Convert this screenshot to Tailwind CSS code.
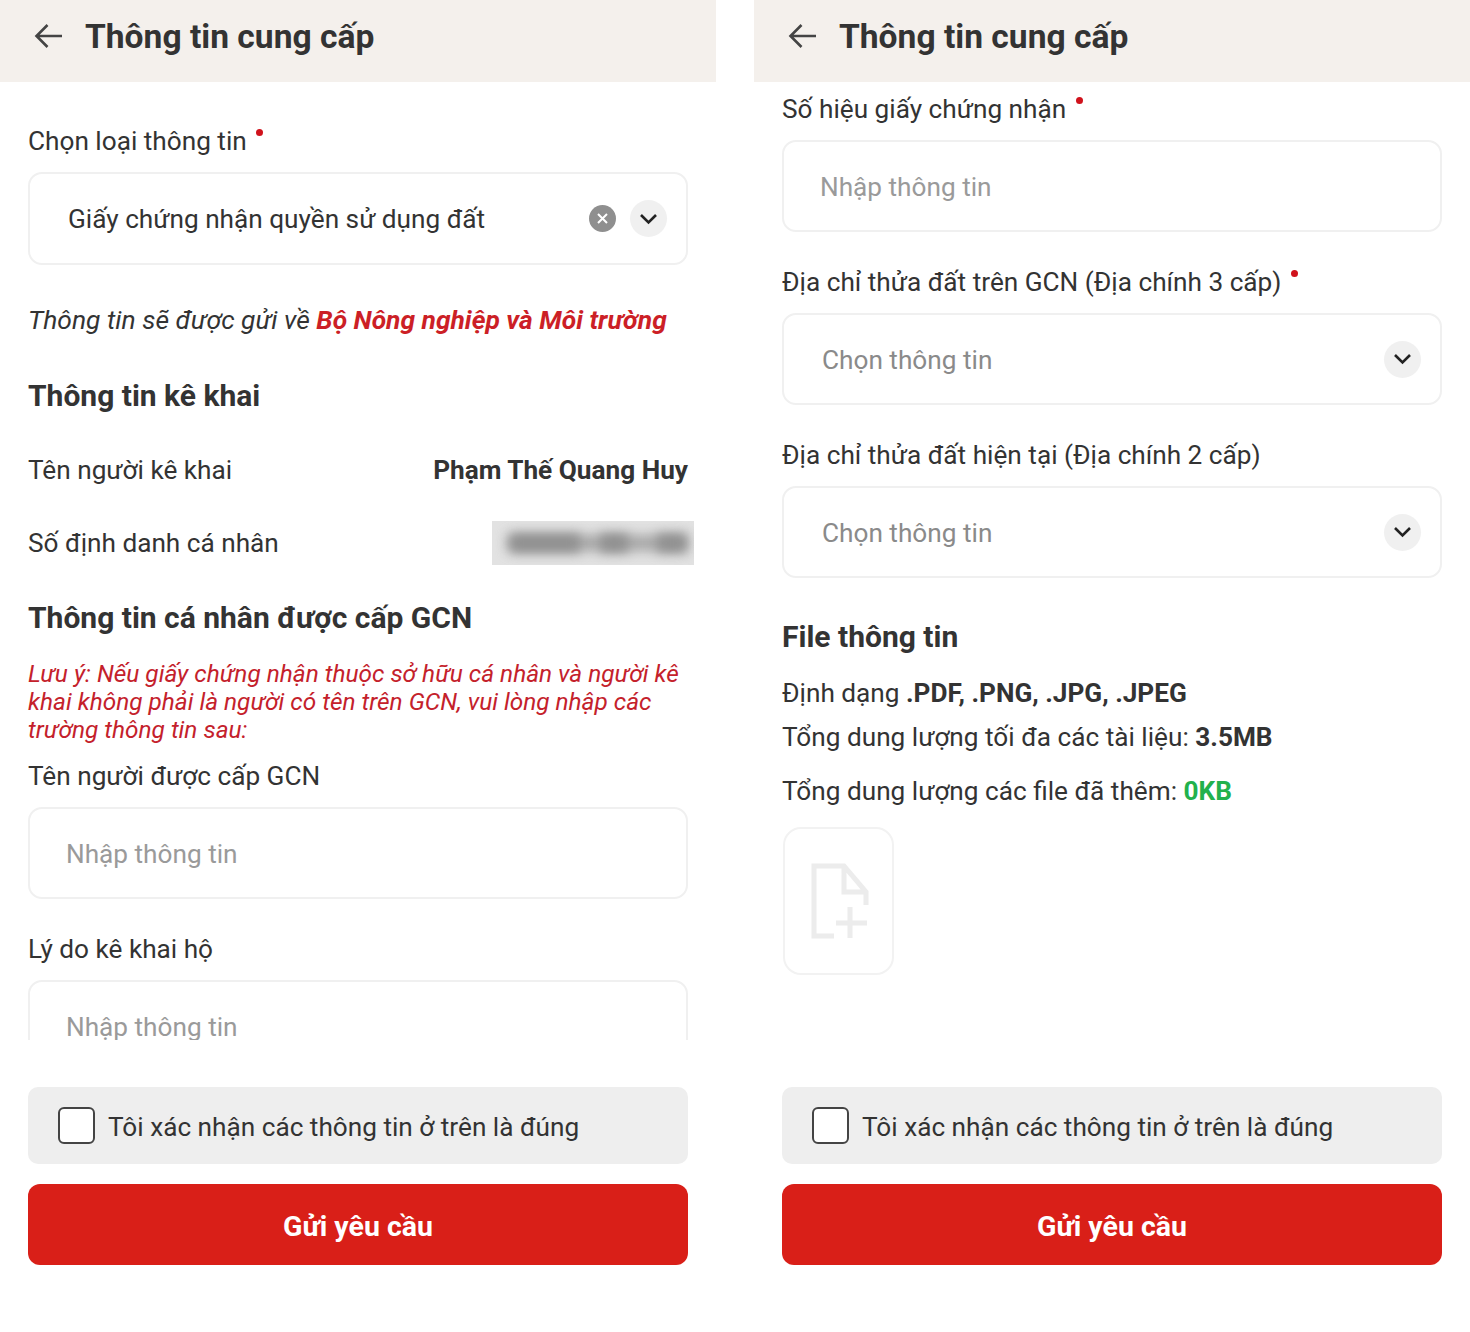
<!DOCTYPE html>
<html lang="vi">
<head>
    <meta charset="UTF-8">
    <title>Thông tin cung cấp</title>
    <script src="https://cdn.jsdelivr.net/npm/@tailwindcss/browser@4"></script>
</head>
<body class="bg-white text-[#333333] font-['Roboto',sans-serif] text-[26.2px]">
    <div class="flex justify-between w-[1470px] h-[1332px] overflow-hidden">

        <!-- left screen -->
        <section class="w-[716px]">
            <header class="h-[82px] bg-[#f4f0ec] flex items-center pl-[34px] pr-7">
                <svg class="w-[30px] h-[30px] mr-[21px] -mt-[10px]" viewBox="0 0 30 30" fill="none" stroke="#444" stroke-width="2.6"><path d="M28 15H3M13.5 4 2.500 15l11 11"/></svg>
                <h1 class="text-[33.6px] font-bold leading-9 -mt-[8px]">Thông tin cung cấp</h1>
            </header>
            <main class="h-[958px] overflow-hidden px-7">
                <div class="mt-[43px] h-8 flex gap-[9px] leading-8"><span>Chọn loại thông tin</span><i class="w-[7px] h-[7px] mt-1 rounded-full bg-[#d0121c]"></i></div>
                <div class="mt-[15px] h-[93px] border-2 border-[#f0f0f0] rounded-[14px] flex items-center pl-[38px] pr-[19px]">
                    <span class="flex-1 pt-[2px]">Giấy chứng nhận quyền sử dụng đất</span>
                    <span class="w-[27px] h-[27px] rounded-full bg-[#8f8f8f] flex items-center justify-center mr-[14px]">
                        <svg class="w-[13px] h-[13px]" viewBox="0 0 13 13" stroke="#fff" stroke-width="2"><path d="M2 2l9 9M11 2l-9 9"/></svg>
                    </span>
                    <span class="w-[37px] h-[37px] rounded-full bg-[#f0f0f0] flex items-center justify-center">
                        <svg class="w-[19px] h-[12px]" viewBox="0 0 19 12" fill="none" stroke="#222" stroke-width="2.6"><path d="M2 2l7.500 7.500L17 2"/></svg>
                    </span>
                </div>
                <p class="mt-[39px] h-8 leading-8 italic whitespace-nowrap text-[26.4px]">Thông tin sẽ được gửi về <b class="text-[#cc1f26]">Bộ Nông nghiệp và Môi trường</b></p>
                <h2 class="mt-[42px] h-9 leading-9 text-[30px] font-bold">Thông tin kê khai</h2>
                <div class="mt-10 h-8 flex justify-between leading-8"><span>Tên người kê khai</span><b class="font-bold">Phạm Thế Quang Huy</b></div>
                <div class="mt-[35px] h-11 flex justify-between items-center">
                    <span class="pt-[2px]">Số định danh cá nhân</span>
                    <div class="w-[202px] h-11 -mr-[6px] bg-[#e2e2e2] overflow-hidden relative">
                        <div class="absolute left-4 right-2 top-[14px] h-4 bg-[#a8a8a8] blur-[6px]"></div>
                        <div class="absolute left-[18px] top-[13px] w-[70px] h-[18px] bg-[#8f8f8f] blur-[6px]"></div>
                        <div class="absolute left-[108px] top-[13px] w-[28px] h-[18px] bg-[#8f8f8f] blur-[6px]"></div>
                        <div class="absolute left-[165px] top-[13px] w-[30px] h-[18px] bg-[#8f8f8f] blur-[6px]"></div>
                    </div>
                </div>
                <h2 class="mt-[35px] h-9 leading-9 text-[30px] font-bold">Thông tin cá nhân được cấp GCN</h2>
                <p class="mt-6 leading-7 italic text-[#c4212b] text-[24.4px]">Lưu ý: Nếu giấy chứng nhận thuộc sở hữu cá nhân và người kê khai không phải là người có tên trên GCN, vui lòng nhập các trường thông tin sau:</p>
                <div class="mt-4 h-8 leading-8">Tên người được cấp GCN</div>
                <div class="mt-[15px] h-[92px] border-2 border-[#f0f0f0] rounded-[14px] flex items-center pl-9 pt-1 text-[#9a9a9a]">Nhập thông tin</div>
                <div class="mt-[34px] h-8 leading-8">Lý do kê khai hộ</div>
                <div class="mt-[15px] h-[92px] border-2 border-[#f0f0f0] rounded-[14px] flex items-center pl-9 pt-1 text-[#9a9a9a]">Nhập thông tin</div>
            </main>
            <footer class="px-7">
                <label class="mt-[47px] h-[77px] bg-[#eeeeee] rounded-[10px] flex items-center pl-[30px]">
                    <span class="w-[37px] h-[37px] bg-white border-2 border-[#444] rounded-[6px] mr-[13px]"></span>
                    <span class="pt-[5px]">Tôi xác nhận các thông tin ở trên là đúng</span>
                </label>
                <button class="mt-5 w-full h-[81px] pt-[5px] bg-[#d91f18] rounded-[12px] text-white font-bold text-[28.5px]">Gửi yêu cầu</button>
            </footer>
        </section>

        <!-- right screen -->
        <section class="w-[716px]">
            <header class="h-[82px] bg-[#f4f0ec] flex items-center pl-[34px] pr-7">
                <svg class="w-[30px] h-[30px] mr-[21px] -mt-[10px]" viewBox="0 0 30 30" fill="none" stroke="#444" stroke-width="2.6"><path d="M28 15H3M13.5 4 2.500 15l11 11"/></svg>
                <h1 class="text-[33.6px] font-bold leading-9 -mt-[8px]">Thông tin cung cấp</h1>
            </header>
            <main class="h-[958px] overflow-hidden px-7">
                <div class="mt-[11px] h-8 flex gap-[10px] leading-8"><span>Số hiệu giấy chứng nhận</span><i class="w-[7px] h-[7px] mt-1 rounded-full bg-[#d0121c]"></i></div>
                <div class="mt-[15px] h-[92px] border-2 border-[#f0f0f0] rounded-[14px] flex items-center pl-9 pt-1 text-[#9a9a9a]">Nhập thông tin</div>
                <div class="mt-[34px] h-8 flex gap-[10px] leading-8"><span>Địa chỉ thửa đất trên GCN (Địa chính 3 cấp)</span><i class="w-[7px] h-[7px] mt-1 rounded-full bg-[#d0121c]"></i></div>
                <div class="mt-[15px] h-[92px] border-2 border-[#f0f0f0] rounded-[14px] flex items-center justify-between pl-[38px] pr-[19px] text-[#8a8a8a]">
                    <span class="pt-1">Chọn thông tin</span>
                    <span class="w-[37px] h-[37px] rounded-full bg-[#f0f0f0] flex items-center justify-center">
                        <svg class="w-[19px] h-[12px]" viewBox="0 0 19 12" fill="none" stroke="#222" stroke-width="2.6"><path d="M2 2l7.500 7.500L17 2"/></svg>
                    </span>
                </div>
                <div class="mt-[34px] h-8 leading-8">Địa chỉ thửa đất hiện tại (Địa chính 2 cấp)</div>
                <div class="mt-[15px] h-[92px] border-2 border-[#f0f0f0] rounded-[14px] flex items-center justify-between pl-[38px] pr-[19px] text-[#8a8a8a]">
                    <span class="pt-1">Chọn thông tin</span>
                    <span class="w-[37px] h-[37px] rounded-full bg-[#f0f0f0] flex items-center justify-center">
                        <svg class="w-[19px] h-[12px]" viewBox="0 0 19 12" fill="none" stroke="#222" stroke-width="2.6"><path d="M2 2l7.500 7.500L17 2"/></svg>
                    </span>
                </div>
                <h2 class="mt-[41px] h-9 leading-9 text-[30px] font-bold">File thông tin</h2>
                <div class="mt-[22px] h-8 leading-8">Định dạng <b>.PDF, .PNG, .JPG, .JPEG</b></div>
                <div class="mt-3 h-8 leading-8">Tổng dung lượng tối đa các tài liệu: <b>3.5MB</b></div>
                <div class="mt-[22px] h-8 leading-8">Tổng dung lượng các file đã thêm: <b class="text-[#22b14c]">0KB</b></div>
                <div class="mt-5 ml-px w-[111px] h-[148px] border-2 border-[#f2f2f2] rounded-[18px] flex items-center justify-center">
                    <svg class="w-[58px] h-[76px] ml-[3px]" viewBox="0 0 58 76" fill="none" stroke="#ececec" stroke-width="5"><path d="M23 73H3V3h30l22 26v13M33 3v26h22M39 44v31M25 60h31"/></svg>
                </div>
            </main>
            <footer class="px-7">
                <label class="mt-[47px] h-[77px] bg-[#eeeeee] rounded-[10px] flex items-center pl-[30px]">
                    <span class="w-[37px] h-[37px] bg-white border-2 border-[#444] rounded-[6px] mr-[13px]"></span>
                    <span class="pt-[5px]">Tôi xác nhận các thông tin ở trên là đúng</span>
                </label>
                <button class="mt-5 w-full h-[81px] pt-[5px] bg-[#d91f18] rounded-[12px] text-white font-bold text-[28.5px]">Gửi yêu cầu</button>
            </footer>
        </section>
    </div>
</body>
</html>
